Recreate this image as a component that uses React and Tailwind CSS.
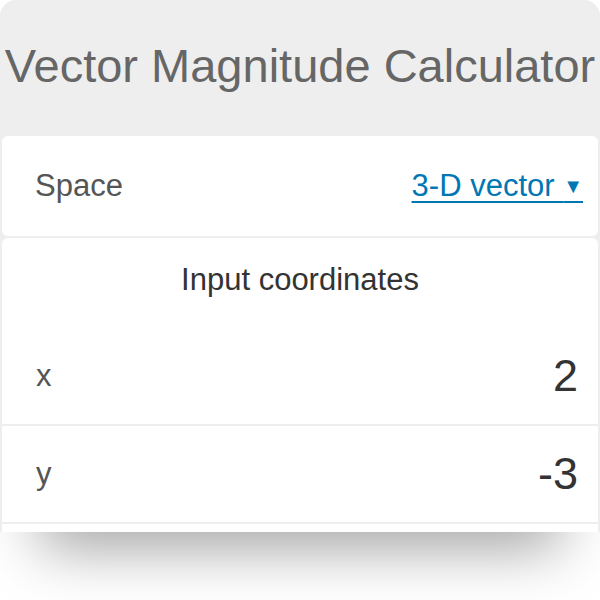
import React from 'react';

const Row = ({ label, value }) => (
    <div className="flex items-center justify-between h-[98px] pl-[34px] pr-[20px] border-b-2 border-[#eeeeee]">
        <span className="text-[31px] text-[#555555]">{label}</span>
        <span className="text-[45px] text-[#333333]">{value}</span>
    </div>
);

const App = () => (
    <div className="w-[600px] h-[600px] bg-white overflow-hidden font-['Liberation_Sans',Arial,sans-serif]">
        <div className="h-[532px] bg-[#eeeeee] rounded-t-[16px] px-[2px] flex flex-col overflow-hidden">
            <div className="h-[136px] flex items-center justify-center shrink-0">
                <h1 className="text-[47px] text-[#666666] whitespace-nowrap pb-[4px]">
                    Vector Magnitude Calculator
                </h1>
            </div>

            {/* space selector */}
            <div className="h-[100px] bg-white rounded-[6px] flex items-center justify-between pl-[33px] pr-[15px] shrink-0">
                <span className="text-[31px] text-[#555555]">Space</span>
                <a className="text-[31px] text-[#0077b3] underline underline-offset-[5px] decoration-[2px] whitespace-pre">
                    3-D vector <span className="text-[20px] align-[3px]">▼</span>
                </a>
            </div>

            <div className="mt-[2px] bg-white rounded-t-[6px] flex-1">
                <div className="h-[90px] flex items-center justify-center pb-[6px]">
                    <span className="text-[31px] text-[#333333]">Input coordinates</span>
                </div>
                <Row label="x" value="2" />
                <Row label="y" value="-3" />
            </div>
        </div>

        {/* shadow under the cut widget */}
        <div className="h-[68px] overflow-hidden">
            <div className="mx-[55px] h-[40px] -mt-[40px] shadow-[0_0_60px_15px_rgba(0,0,0,0.38)]" />
        </div>
    </div>
);

export default App;
